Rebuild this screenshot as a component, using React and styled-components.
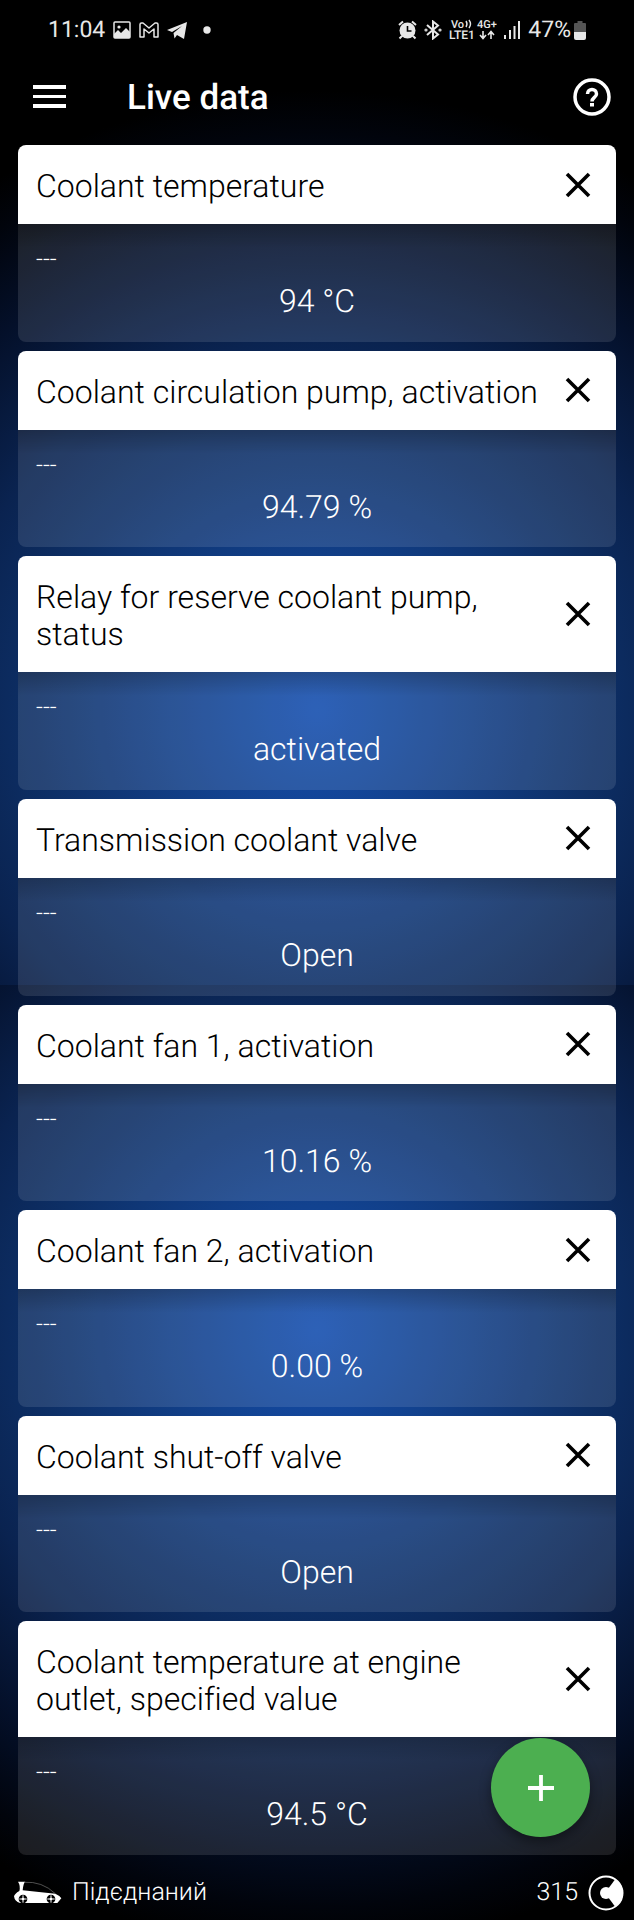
import styled, { createGlobalStyle } from "styled-components"

const GlobalStyle = createGlobalStyle`
  * {
    box-sizing: border-box;
  }
  body {
    margin: 0;
    background-color: #000;
    font-family: Roboto, "Noto Sans", sans-serif;
    font-weight: 300;
    font-variant-ligatures: none;
    text-rendering: geometricPrecision;
    color: #fff;
  }
  h1, h2, p {
    margin: 0;
  }
  button {
    display: flex;
    align-items: center;
    justify-content: center;
    padding: 0;
    border: none;
    background: none;
    color: inherit;
    font: inherit;
    cursor: pointer;
  }
  svg {
    display: block;
    flex-shrink: 0;
  }
`

const glow = "#144eaf 0%, #12428f 20%, #0d2f66 45%, #0a2350 60%, #04102a 79%, #01040c 93%, #000 100%";

const Page = styled.div`
  position: relative;
  display: flex;
  flex-direction: column;
  min-height: 100vh;
  background:
    radial-gradient(circle 620px at 50% 710px, ${glow}) top / 100% 985px no-repeat,
    radial-gradient(circle 620px at 50% 345px, ${glow}) 0 985px / 100% 935px no-repeat,
    #000;
`
const StatusBar = styled.div`
  display: flex;
  align-items: center;
  justify-content: space-between;
  height: 60px;
  padding: 0 48px;
  font-size: 23px;
  font-weight: 400;
  line-height: 28px;
  color: #e8e8e8;
`
const StatusGroup = styled.div`
  display: flex;
  align-items: center;
  gap: ${({ $gap = 8 }) => $gap}px;
`
const AppBar = styled.header`
  display: flex;
  align-items: center;
  height: 85px;
  padding: 0 23px 12px 33px;
`
const Title = styled.h1`
  flex: 1;
  margin-left: 61px;
  padding-top: 2px;
  font-size: 35px;
  font-weight: 500;
  line-height: 40px;
`
const CardList = styled.main`
  display: flex;
  flex: 1;
  flex-direction: column;
  gap: 9px;
  padding: 0 18px;
`
const CardBox = styled.section`
  display: flex;
  flex: 1 0 auto;
  flex-direction: column;
  overflow: hidden;
  border-radius: 8px;
`
const CardHeader = styled.div`
  display: flex;
  align-items: center;
  justify-content: space-between;
  gap: 24px;
  padding: 19px 25px 19px 18px;
  background-color: #fff;
  color: #000;
`
const CardTitle = styled.h2`
  padding-top: 4px;
  font-size: 32px;
  font-weight: 300;
  line-height: 37px;
`
const CardBody = styled.div`
  display: flex;
  flex: 1;
  flex-direction: column;
  gap: 10px;
  padding: 21px 18px;
  background:
    linear-gradient(rgba(0, 0, 0, 0.2), rgba(0, 0, 0, 0) 24px),
    rgba(255, 255, 255, 0.11);
`
const Unit = styled.p`
  font-size: 24px;
  line-height: 28px;
`
const Value = styled.p`
  font-size: 32px;
  line-height: 37px;
  text-align: center;
`
const AddButton = styled.button`
  position: absolute;
  right: 44px;
  bottom: 83px;
  width: 99px;
  height: 99px;
  border-radius: 50%;
  background-color: #4caf50;
  box-shadow: 0 5px 12px rgba(0, 0, 0, 0.4);
`
const Footer = styled.footer`
  display: flex;
  align-items: center;
  justify-content: space-between;
  height: 65px;
  padding: 10px 10px 0 14px;
  font-size: 25px;
  line-height: 30px;
`
const FooterGroup = styled.div`
  display: flex;
  align-items: center;
  gap: 10px;
`

const PhotoIcon = () => (
  <svg width="18" height="18" viewBox="0 0 18 18" fill="none">
    <rect x="1" y="1" width="16" height="16" rx="1" stroke="currentColor" strokeWidth="1.5" />
    <circle cx="6" cy="6" r="1.6" fill="currentColor" />
    <path d="M1 13l4-4 3 3 5-5 4 4v6H1z" fill="currentColor" />
  </svg>
)

const MailIcon = () => (
  <svg width="20" height="16" viewBox="0 0 20 16" fill="none" stroke="currentColor" strokeWidth="1.5" strokeLinejoin="round">
    <path d="M1 15V2.500Q1 1 2.500 1L4 1l6 5 6-5 1.500 0Q19 1 19 2.500V15h-4V7l-5 4-5-4v8z" />
  </svg>
)

const TelegramIcon = () => (
  <svg width="20" height="17" viewBox="0 0 20 17" fill="currentColor">
    <path d="M0 8L20 0l-3 17-7-4-2.500 3.500L6.500 11 15 4 5 10z" />
  </svg>
)

const MoreIcon = () => (
  <svg width="24" height="8" viewBox="0 0 24 8" fill="currentColor">
    <circle cx="12" cy="4" r="3.700" />
  </svg>
)

const AlarmIcon = () => (
  <svg width="19" height="20" viewBox="0 0 19 20">
    <circle cx="9.500" cy="10.500" r="8" fill="currentColor" />
    <path d="M1 5l4-3.500M18 5l-4-3.500M4 16l-2.500 2.500M15 16l2.500 2.500" stroke="currentColor" strokeWidth="2" />
    <path d="M9.500 6v5h4" fill="none" stroke="#000" strokeWidth="1.600" />
  </svg>
)

const BluetoothIcon = () => (
  <svg width="18" height="20" viewBox="0 0 18 20" fill="none" stroke="currentColor" strokeWidth="2">
    <path d="M3 5l11 9.500-5 4V1.500l5 4L3 15" />
    <circle cx="2" cy="10" r="0.600" />
    <circle cx="16" cy="10" r="0.600" />
  </svg>
)

const NetworkIcon = () => (
  <svg width="48" height="22" viewBox="0 0 48 22" fill="currentColor" fontFamily="Roboto, sans-serif" fontWeight="500">
    <text x="2" y="9" fontSize="11">Vo</text>
    <path d="M17 2q2 3 0 6M20 1q3 4 0 8" fill="none" stroke="currentColor" strokeWidth="1.400" />
    <text x="0" y="20" fontSize="12">LTE1</text>
    <text x="28" y="9" fontSize="11">4G+</text>
    <path d="M34 12v7M31 16l3 3.500 3-3.500M42 20v-7M39 16l3-3.500 3 3.500" fill="none" stroke="currentColor" strokeWidth="1.600" />
  </svg>
)

const SignalIcon = () => (
  <svg width="17" height="18" viewBox="0 0 17 18" fill="currentColor">
    <path d="M0 14h2v4H0zM5 9h2v9H5zM9.500 5h2v13h-2zM14 0h2v18h-2z" />
  </svg>
)

const BatteryIcon = () => (
  <svg width="12" height="19" viewBox="0 0 12 19">
    <path d="M3.500 0h5v2H11q1 0 1 1v8H0V3q0-1 1-1h2.500z" fill="#555" />
    <path d="M0 11h12v6q0 2-2 2H2q-2 0-2-2z" fill="currentColor" />
  </svg>
)

const MenuIcon = () => (
  <svg width="33" height="24" viewBox="0 0 33 24" fill="currentColor">
    <path d="M0 0h33v4H0zM0 10h33v3H0zM0 19h33v4H0z" />
  </svg>
)

const HelpIcon = () => (
  <svg width="38" height="38" viewBox="0 0 38 38" fill="none" stroke="currentColor" strokeWidth="3.500">
    <circle cx="19" cy="19" r="17" />
    <path d="M14.500 16c0-6 9-6 9 0 0 3.500-4.500 3.500-4.500 7.500" />
    <path d="M19 25v3.500" strokeWidth="4" />
  </svg>
)

const CloseIcon = () => (
  <svg width="26" height="26" viewBox="0 0 26 26" stroke="currentColor" strokeWidth="3.600">
    <path d="M2 2l22 22M24 2L2 24" />
  </svg>
)

const PlusIcon = () => (
  <svg width="26" height="26" viewBox="0 0 26 26" stroke="currentColor" strokeWidth="3.800">
    <path d="M13 0v26M0 13h26" />
  </svg>
)

const CarIcon = () => (
  <svg width="48" height="24" viewBox="0 0 144 72">
    <path d="M12 2H34q-6 4-8 26l98 10q14 6 18 14l-12 14H18Q2 62 0 46q2-8 16-16Q20 14 12 2z" fill="#fff" />
    <path d="M30 4q54-4 94 34" fill="none" stroke="#777" strokeWidth="2" />
    <g fill="#000">
      <circle cx="27" cy="54" r="13" />
      <circle cx="111" cy="54" r="13" />
    </g>
    <path d="M27 43v22M16 54h22M111 43v22M100 54h22" stroke="#fff" strokeWidth="3" />
    <g fill="#fff">
      <circle cx="27" cy="54" r="4" />
      <circle cx="111" cy="54" r="4" />
    </g>
  </svg>
)

const GaugeIcon = () => (
  <svg width="36" height="36" viewBox="0 0 36 36">
    <circle cx="18" cy="18" r="16.500" fill="none" stroke="#fff" strokeWidth="2" />
    <path d="M17 18L27 4.500Q35 9 35 18t-8 13.500z" fill="#fff" />
    <circle cx="18" cy="18" r="6" fill="#fff" />
  </svg>
)

const parameters = [
  { name: "Coolant temperature", value: "94 °C" },
  { name: "Coolant circulation pump, activation", value: "94.79 %" },
  { name: "Relay for reserve coolant pump, status", value: "activated" },
  { name: "Transmission coolant valve", value: "Open" },
  { name: "Coolant fan 1, activation", value: "10.16 %" },
  { name: "Coolant fan 2, activation", value: "0.00 %" },
  { name: "Coolant shut-off valve", value: "Open" },
  { name: "Coolant temperature at engine outlet, specified value", value: "94.5 °C" },
]

const Card = ({ name, value, unit = "---" }) => {
  return (
    <CardBox>
      <CardHeader>
        <CardTitle>{name}</CardTitle>
        <button type="button" aria-label={`Remove ${name}`}>
          <CloseIcon />
        </button>
      </CardHeader>
      <CardBody>
        <Unit>{unit}</Unit>
        <Value>{value}</Value>
      </CardBody>
    </CardBox>
  )
}

const App = () => {
  return (
    <>
      <GlobalStyle />
      <Page>
        <StatusBar>
          <StatusGroup>
            <span>11:04</span>
            <PhotoIcon />
            <MailIcon />
            <TelegramIcon />
            <MoreIcon />
          </StatusGroup>
          <StatusGroup $gap={7}>
            <AlarmIcon />
            <BluetoothIcon />
            <NetworkIcon />
            <SignalIcon />
            <StatusGroup $gap={3}>
              <span>47%</span>
              <BatteryIcon />
            </StatusGroup>
          </StatusGroup>
        </StatusBar>
        <AppBar>
          <button type="button" aria-label="Menu">
            <MenuIcon />
          </button>
          <Title>Live data</Title>
          <button type="button" aria-label="Help">
            <HelpIcon />
          </button>
        </AppBar>
        <CardList>
          {parameters.map((item) => (
            <Card key={item.name} {...item} />
          ))}
        </CardList>
        <Footer>
          <FooterGroup>
            <CarIcon />
            <span>Підєднаний</span>
          </FooterGroup>
          <FooterGroup>
            <span>315</span>
            <GaugeIcon />
          </FooterGroup>
        </Footer>
        <AddButton type="button" aria-label="Add parameter">
          <PlusIcon />
        </AddButton>
      </Page>
    </>
  )
}

export default App
